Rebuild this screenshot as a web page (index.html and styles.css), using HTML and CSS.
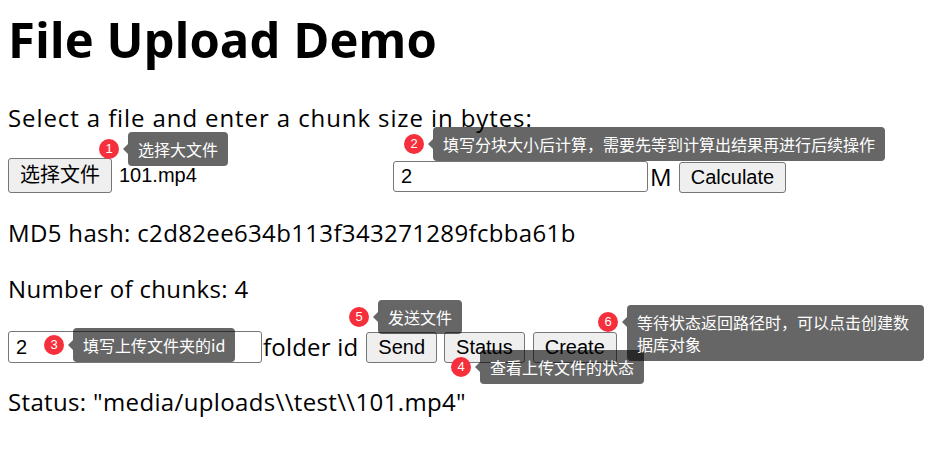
FILE: index.html
```html
<!DOCTYPE html>
<html lang="en">
<head>
<meta charset="utf-8">
<title>File Upload Demo</title>
<link rel="stylesheet" href="styles.css">
</head>
<body>
<main class="page">
  <h1 class="title">File Upload Demo</h1>
  <p class="line line-intro">Select a file and enter a chunk size in bytes:</p>
  <div class="row row-chunk">
    <span class="file-picker">
      <button class="btn btn-file" type="button">选择文件</button>
      <span class="file-name">101.mp4</span>
    </span>
    <input class="field field-size" type="text" value="2">
    <span class="unit">M</span>
    <button class="btn btn-calc" type="button">Calculate</button>
  </div>
  <p class="line">MD5 hash: c2d82ee634b113f343271289fcbba61b</p>
  <p class="line">Number of chunks: 4</p>
  <div class="row row-folder">
    <input class="field field-folder" type="text" value="2">
    <span class="unit unit-folder">folder id</span>
    <button class="btn btn-send" type="button">Send</button>
    <button class="btn btn-status" type="button">Status</button>
    <button class="btn btn-create" type="button">Create</button>
  </div>
  <p class="line">Status: "media/uploads\\test\\101.mp4"</p>
</main>

<div class="overlay">
  <div class="note note-1"><span class="badge">1</span>选择大文件</div>
  <div class="note note-2"><span class="badge">2</span>填写分块大小后计算，需要先等到计算出结果再进行后续操作</div>
  <div class="note note-3"><span class="badge">3</span>填写上传文件夹的id</div>
  <div class="note note-4"><span class="badge">4</span>查看上传文件的状态</div>
  <div class="note note-5"><span class="badge">5</span>发送文件</div>
  <div class="note note-6"><span class="badge">6</span>等待状态返回路径时，可以点击创建数据库对象</div>
</div>
</body>
</html>
```

FILE: styles.css
```css
* { box-sizing: border-box; }

html, body {
  margin: 0;
  padding: 0;
  background: #fff;
}

body {
  position: relative;
  width: 926px;
  height: 461px;
  overflow: hidden;
  color: #000;
  font-family: "Open Sans", "Noto Sans", "Noto Sans CJK SC", sans-serif;
  font-size: 24px;
}

.page {
  padding: 7px 8px 0;
}

.title {
  margin: 0 0 31px;
  font-size: 49px;
  line-height: 64px;
  font-weight: 700;
}

.line {
  margin: 0;
  line-height: 32px;
  white-space: nowrap;
  letter-spacing: 0.35px;
}

.line-intro { letter-spacing: 0.9px; }

.line + .row,
.row + .line,
.line + .line {
  margin-top: 24px;
}

.row {
  display: flex;
  align-items: flex-end;
}

.row-chunk { height: 35px; }
.line + .row-folder { height: 32px; margin-top: 26px; }
.row-folder + .line { margin-top: 23px; }

.file-picker {
  display: inline-flex;
  align-items: baseline;
  width: 385px;
}

.btn {
  font-family: "Liberation Sans", "Noto Sans CJK SC", sans-serif;
  font-size: 20px;
  color: #000;
  background: #efefef;
  border: 1px solid #767676;
  border-radius: 3px;
  padding: 0 11px;
  height: 31px;
  line-height: 29px;
}

.btn-file {
  height: 35px;
  line-height: 33px;
  padding: 0 11px;
}

.file-name {
  margin-left: 7px;
  font-family: "Liberation Sans", sans-serif;
  font-size: 20px;
}

.field {
  font-family: "Liberation Sans", sans-serif;
  font-size: 20px;
  color: #000;
  border: 1px solid #767676;
  border-radius: 3px;
  padding: 0 7px;
  height: 31px;
  background: #fff;
}

.field-size { width: 255px; margin-bottom: 1px; }
.field-folder { width: 254px; height: 32px; }

.unit {
  margin: 0 7px 0 2px;
  line-height: 32px;
  letter-spacing: 0.2px;
}

.unit-folder { margin: 0 8px 0 1px; }

.btn-status { margin-left: 7px; }
.btn-create { margin-left: 8px; }

/* annotation overlay */
.overlay {
  position: absolute;
  left: 0;
  top: 0;
}

.note {
  position: absolute;
  background: rgba(0, 0, 0, 0.6);
  color: #fff;
  font-family: "Noto Sans CJK SC", "Liberation Sans", sans-serif;
  font-size: 16px;
  line-height: 22px;
  padding: 6px 10px;
  border-radius: 4px;
  white-space: nowrap;
}

.note::before {
  content: "";
  position: absolute;
  left: -5px;
  top: 12px;
  border-style: solid;
  border-width: 5px 5px 5px 0;
  border-color: transparent rgba(0, 0, 0, 0.6) transparent transparent;
}

.badge {
  position: absolute;
  left: -29px;
  top: 7px;
  width: 20px;
  height: 20px;
  border-radius: 50%;
  background: #f5303c;
  color: #fff;
  font-family: "Liberation Sans", sans-serif;
  font-size: 13px;
  line-height: 20px;
  text-align: center;
}

.note-1 { left: 128px; top: 132px; }
.note-2 { left: 433px; top: 127px; }
.note-3 { left: 73px; top: 328px; }
.note-4 { left: 480px; top: 350px; }
.note-5 { left: 378px; top: 300px; }
.note-6 { left: 627px; top: 305px; width: 297px; white-space: normal; }
```
